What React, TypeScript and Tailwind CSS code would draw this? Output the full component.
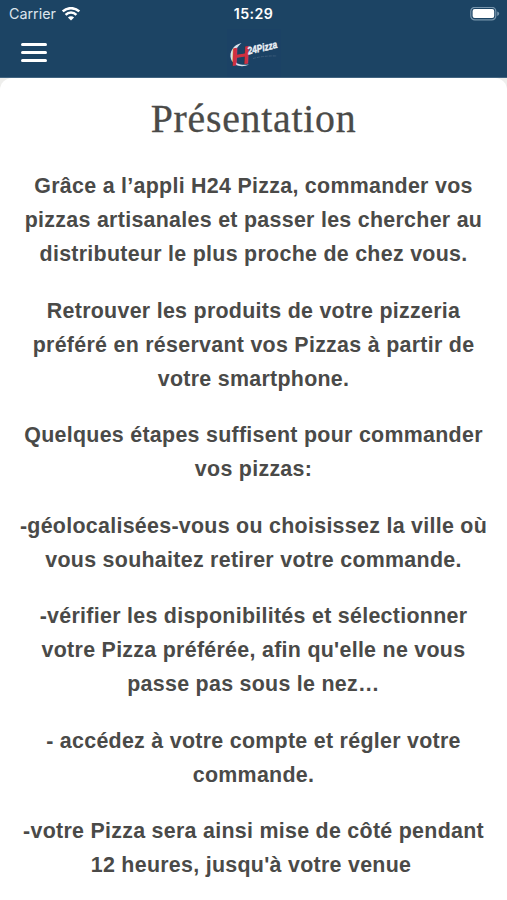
const paragraphs: string[][] = [
  ["Grâce a l’appli H24 Pizza, commander vos", "pizzas artisanales et passer les chercher au", "distributeur le plus proche de chez vous."],
  ["Retrouver les produits de votre pizzeria", "préféré en réservant vos Pizzas à partir de", "votre smartphone."],
  ["Quelques étapes suffisent pour commander", "vos pizzas:"],
  ["-géolocalisées-vous ou choisissez la ville où", "vous souhaitez retirer votre commande."],
  ["-vérifier les disponibilités et sélectionner", "votre Pizza préférée, afin qu'elle ne vous", "passe pas sous le nez…"],
  ["- accédez à votre compte et régler votre", "commande."],
  ["-votre Pizza sera ainsi mise de côté pendant", "12 heures, jusqu'à votre venue"],
];

function WifiIcon() {
  return (
    <svg width="20" height="15" viewBox="0 0 20 15" fill="none" stroke="#fff" strokeWidth="2.5">
      <path d="M1.7 4.4a12.2 12.2 0 0 1 16.6 0" />
      <path d="M4.6 7.8a7.6 7.6 0 0 1 10.8 0" />
      <path d="M10 13.500 6.900 10.500a4.400 4.400 0 0 1 6.200 0Z" fill="#fff" stroke="none" />
    </svg>
  );
}

function Battery() {
  return (
    <svg width="32" height="15" viewBox="0 0 32 15">
      <rect x="2.8" y="0.3" width="25" height="12.6" rx="4" fill="none" stroke="#7795ac" strokeWidth="1.2" />
      <rect x="4.6" y="1.9" width="21.6" height="9.2" rx="2" fill="#fff" />
      <path d="M29.2 4.500q2 .6 2 2.200t-2 2.200Z" fill="#7795ac" />
    </svg>
  );
}

function Logo() {
  return (
    <svg width="54" height="48" viewBox="0 0 54 48" overflow="visible">
      <rect width="54" height="48" fill="#1b4265" />
      <path d="M14.500 14C6 16 2 23 4 30c2.500 7 11 9 18 5.500-7 1-14.500 0-15-6C6.500 25 8.500 19 14.500 14Z" fill="#d6e2ec" />
      <path d="M26 29.500q11-3 24-2.500" fill="none" stroke="#3b5b7a" strokeWidth="1" strokeDasharray="3 1" />
      <g transform="translate(5 37) skewX(0) rotate(-9)">
        <text fontFamily="Liberation Sans, sans-serif" fontWeight="bold" fontStyle="italic" fontSize="25" fill="#cf3040" textLength="19" lengthAdjust="spacingAndGlyphs">H</text>
      </g>
      <text transform="translate(21.500 25.500) rotate(-13)" fontFamily="Liberation Sans, sans-serif" fontWeight="bold" fontStyle="italic" fontSize="10.500" fill="#eef3f8" stroke="#eef3f8" strokeWidth=".4" textLength="30" lengthAdjust="spacingAndGlyphs">24Pizza</text>
    </svg>
  );
}

export default function App() {
  return (
    <div className="h-[900px] w-[507px] overflow-hidden bg-[#eeeeec]">
      <header className="h-[78px] border-b border-[#426581] bg-[#1c4464] text-white">
        <div className="grid h-[28px] grid-cols-3 items-center pl-[9px] pr-[7px] font-['Inter','Liberation_Sans',sans-serif]">
          <div className="flex items-center gap-[5px] text-[14.3px] leading-5 text-[#dce5ed]">
            <span>Carrier</span>
            <WifiIcon />
          </div>
          <div className="-ml-[2px] text-center text-[14.2px] font-semibold leading-5 tracking-[0.4px]">15:29</div>
          <div className="flex justify-end"><Battery /></div>
        </div>
        <div className="grid h-[49px] grid-cols-3 items-center pl-[21px] pr-[19px]">
          <button aria-label="Menu" className="flex w-[26px] flex-col gap-[5px]">
            <span className="h-[3px] rounded-full bg-white" />
            <span className="h-[3px] rounded-full bg-white" />
            <span className="h-[3px] rounded-full bg-white" />
          </button>
          <div className="flex justify-center"><Logo /></div>
        </div>
      </header>
      <main className="h-[822px] rounded-t-[12px] bg-white pt-[17px] text-center text-[#4a4a48]">
        <h1 className="mb-[25px] font-['Liberation_Serif',serif] text-[39.8px] leading-[49px] tracking-[0.75px] [-webkit-text-stroke:0.3px_#4a4a48]">Présentation</h1>
        <div className="flex flex-col gap-[22px] font-['Liberation_Sans',Arial,sans-serif] text-[21.4px] font-bold leading-[34.2px] tracking-[0.29px]">
          {paragraphs.map((lines) => (
            <p key={lines[0]} className="last:[&>span:last-child]:pr-[5px]">
              {lines.map((line) => (
                <span key={line} className="block whitespace-nowrap">{line}</span>
              ))}
            </p>
          ))}
        </div>
      </main>
    </div>
  );
}
